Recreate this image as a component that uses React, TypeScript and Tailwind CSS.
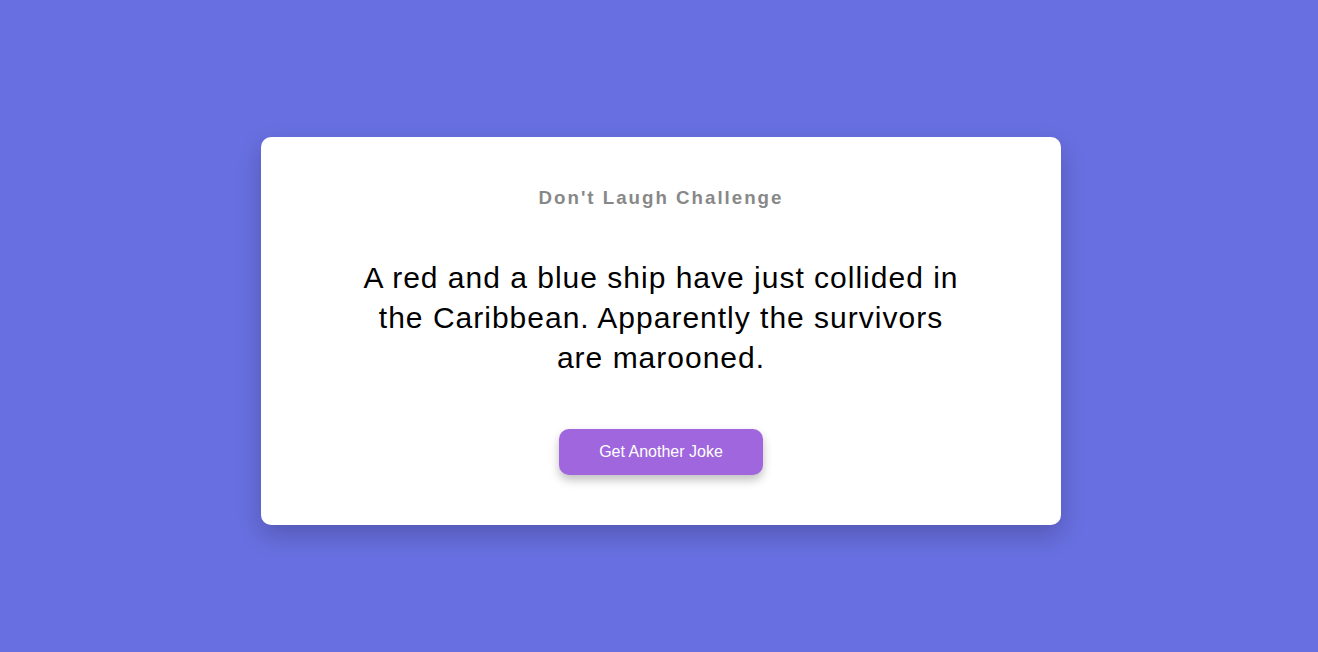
import React from 'react';

export default function App() {
  return (
    <div className="flex h-[652px] w-full justify-center bg-[#686fe0] pt-[137px] pl-[4px] font-['Liberation_Sans',Arial,sans-serif]">
      <div className="flex h-[388px] w-[800px] flex-col items-center rounded-[10px] bg-white px-[50px] pt-[50px] shadow-[0_10px_25px_rgba(0,0,0,0.2)]">
        <h3 className="text-[18.72px] leading-[22px] font-bold tracking-[2px] text-[#888888]">
          Don't Laugh Challenge
        </h3>
        <p className="mt-[49px] max-w-[600px] text-center text-[30px] leading-[40px] tracking-[1px] text-black">
          A red and a blue ship have just collided in the Caribbean. Apparently the survivors are marooned.
        </p>
        <button className="mt-[51px] h-[46px] w-[204px] rounded-[10px] bg-[#a066dd] text-[16px] text-white shadow-[0_5px_10px_rgba(0,0,0,0.25)]">
          Get Another Joke
        </button>
      </div>
    </div>
  );
}
